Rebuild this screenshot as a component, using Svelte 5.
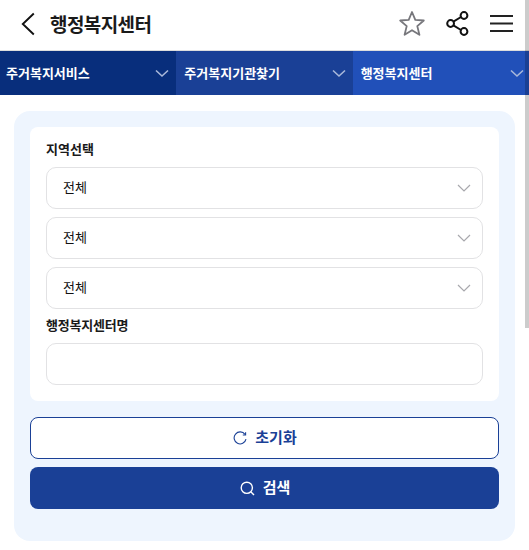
<script>
  const tabs = [
    { label: '주거복지서비스', cls: 'tab-one' },
    { label: '주거복지기관찾기', cls: 'tab-two' },
    { label: '행정복지센터', cls: 'tab-three' }
  ];
  const regions = ['전체', '전체', '전체'];
  let centerName = $state('');
</script>

<div class="page">
  <header class="topbar">
    <div class="title-wrap">
      <svg class="back" width="14" height="24" viewBox="0 0 14 24" fill="none">
        <path d="M12.8 1.5 L1.8 12 L12.8 22.5" stroke="#111" stroke-width="1.9" />
      </svg>
      <h1>행정복지센터</h1>
    </div>
    <div class="actions">
      <svg width="26" height="25" viewBox="0 0 26 25" fill="none">
        <path d="M13 1 L16.3 8.8 L24.8 9.5 L18.3 15.1 L20.4 23.8 L13 19.2 L5.6 23.8 L7.7 15.1 L1.2 9.5 L9.7 8.8 Z" stroke="#77777c" stroke-width="1.8" stroke-linejoin="round" />
      </svg>
      <svg width="23" height="25" viewBox="0 0 23 25" fill="none">
        <path d="M7 10.8 L15 6 M7 14.2 L15 19" stroke="#111" stroke-width="2" />
        <circle cx="4.6" cy="12.5" r="3.4" stroke="#111" stroke-width="2" />
        <circle cx="18" cy="4.5" r="3.4" stroke="#111" stroke-width="2" />
        <circle cx="18" cy="20.5" r="3.4" stroke="#111" stroke-width="2" />
      </svg>
      <svg width="23" height="18" viewBox="0 0 23 18" fill="none">
        <path d="M0 1 H23 M0 8.5 H23 M0 16 H23" stroke="#222" stroke-width="2" />
      </svg>
    </div>
  </header>

  <nav class="tabs">
    {#each tabs as tab}
      <div class="tab {tab.cls}">
        <span>{tab.label}</span>
        <svg width="14" height="9" viewBox="0 0 14 9" fill="none">
          <path d="M1 1.5 L7 7 L13 1.5" stroke="#a9b8da" stroke-width="1.6" />
        </svg>
      </div>
    {/each}
  </nav>

  <main class="panel">
    <section class="form-box">
      <div class="field-label">지역선택</div>
      {#each regions as region}
        <div class="select">
          <span>{region}</span>
          <svg width="14" height="9" viewBox="0 0 14 9" fill="none">
            <path d="M1 1 L7 7 L13 1" stroke="#a8a8ad" stroke-width="1.2" />
          </svg>
        </div>
      {/each}
      <div class="field-label second">행정복지센터명</div>
      <input class="text-input" type="text" bind:value={centerName} />
    </section>

    <button class="btn btn-reset">
      <svg width="14" height="14" viewBox="0 0 14 14" fill="none">
        <path d="M12 3.4 A6 6 0 1 0 13 8.2" stroke="#1a4096" stroke-width="1.1" />
        <path d="M12.6 1.2 V4 H9.8" stroke="#1a4096" stroke-width="1.1" />
      </svg>
      초기화
    </button>
    <button class="btn btn-search">
      <svg width="15" height="15" viewBox="0 0 15 15" fill="none">
        <circle cx="6.8" cy="6.8" r="5.6" stroke="#fff" stroke-width="1.4" />
        <path d="M10.8 10.8 L14 14" stroke="#fff" stroke-width="1.4" />
      </svg>
      검색
    </button>
  </main>

  <div class="scrollbar"></div>
</div>

<style>
  :global(body) {
    margin: 0;
    background: #fff;
    overflow: hidden;
  }

  .page {
    width: 529px;
    height: 550px;
    position: relative;
    overflow: hidden;
    font-family: "Noto Sans CJK KR", "Noto Sans", sans-serif;
    color: #111;
  }

  .topbar {
    height: 50px;
    border-bottom: 1px solid #ddd;
    display: flex;
    align-items: center;
    justify-content: space-between;
    padding: 0 16px 0 21px;
  }

  .title-wrap {
    display: flex;
    align-items: center;
    gap: 15px;
    margin-bottom: 3px;
  }

  .back {
    display: block;
  }

  h1 {
    margin: 0;
    font-size: 19px;
    font-weight: 700;
    letter-spacing: -0.6px;
    line-height: 28px;
    color: #1a1a1a;
  }

  .actions {
    display: flex;
    align-items: center;
    gap: 21px;
    margin-bottom: 3px;
  }

  .actions svg {
    display: block;
  }

  .tabs {
    height: 44px;
    display: grid;
    grid-template-columns: repeat(3, 1fr);
  }

  .tab {
    display: flex;
    align-items: center;
    justify-content: space-between;
    padding: 0 7px 2px 8px;
    font-size: 13px;
    font-weight: 700;
    color: #fff;
  }

  .tab svg {
    margin-top: 2px;
  }

  .tab-one {
    background: #082e7c;
    padding-left: 6px;
  }

  .tab-two {
    background: #1a4096;
  }

  .tab-three {
    background: #2150b9;
    padding-right: 5px;
  }

  .panel {
    margin: 16px 14px 0;
    height: 430px;
    box-sizing: border-box;
    background: #eef5fe;
    border-radius: 16px;
    padding: 16px;
    display: flex;
    flex-direction: column;
  }

  .form-box {
    background: #fff;
    border-radius: 8px;
    padding: 12px 16px 16px;
    display: flex;
    flex-direction: column;
    margin-bottom: 16px;
  }

  .field-label {
    font-size: 13px;
    font-weight: 700;
    line-height: 22px;
    color: #1a1a1a;
    margin-bottom: 6px;
    position: relative;
    top: -1px;
  }

  .field-label.second {
    margin-top: -2px;
    letter-spacing: -0.2px;
  }

  .select {
    height: 42px;
    box-sizing: border-box;
    border: 1px solid #e2e2e4;
    border-radius: 10px;
    display: flex;
    align-items: center;
    justify-content: space-between;
    padding: 0 11px 0 16px;
    font-size: 13px;
    line-height: 18px;
    margin-bottom: 8px;
  }

  .select span {
    margin-top: -2px;
  }

  .text-input {
    height: 42px;
    box-sizing: border-box;
    border: 1px solid #e2e2e4;
    border-radius: 10px;
    outline: none;
    width: 100%;
  }

  .btn {
    height: 42px;
    width: 100%;
    box-sizing: border-box;
    border-radius: 8px;
    font-family: inherit;
    font-size: 15px;
    font-weight: 700;
    line-height: 20px;
    display: flex;
    align-items: center;
    justify-content: center;
    gap: 8px;
    padding: 0 0 2px 1px;
  }

  .btn svg {
    margin-top: 2px;
  }

  .btn-reset {
    background: #fff;
    border: 1px solid #1a4096;
    color: #1a4096;
    margin-bottom: 8px;
  }

  .btn-search {
    background: #1a4096;
    border: none;
    color: #fff;
  }

  .scrollbar {
    position: absolute;
    top: 0;
    right: 0;
    width: 4px;
    height: 328px;
    background: rgba(0, 0, 0, 0.2);
  }
</style>
